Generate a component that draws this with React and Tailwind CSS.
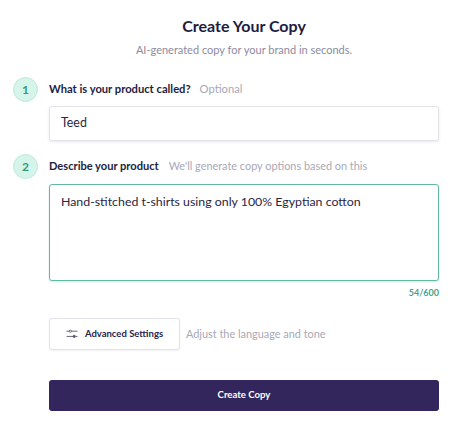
import React from 'react';

const StepBadge = ({ n }) => (
  <div className="w-[25px] h-[25px] rounded-full bg-[#d5f5ea] border border-[#bfeadb] flex items-center justify-center text-[12px] font-bold text-[#2f9c80] shrink-0">
    {n}
  </div>
);

const App = () => {
  return (
    <div className="w-[470px] h-[438px] bg-white overflow-hidden font-['Lato',sans-serif] text-[#221d3f]">
      <div className="pt-[16px] pl-[13px] pr-[31px]">
        <div className="pl-[36px] flex flex-col items-center">
          <h1 className="text-[16px] leading-[20px] font-bold text-[#211c40]">Create Your Copy</h1>
          <p className="mt-[6px] text-[11px] leading-[16px] text-[#8d8ba0]">AI-generated copy for your brand in seconds.</p>
        </div>

        <div className="mt-[19px] flex items-center gap-[11px]">
          <StepBadge n={1} />
          <div className="flex items-baseline gap-[9px]">
            <span className="text-[11.2px] font-bold text-[#221d3f]">What is your product called?</span>
            <span className="text-[11.2px] text-[#a9a8b5]">Optional</span>
          </div>
        </div>
        <div className="ml-[36px] mt-[4px] h-[35px] px-[11px] flex items-center bg-white border border-[#e3e3ea] rounded-[3px] shadow-[0_1px_3px_rgba(30,30,70,0.10)] text-[12.4px] text-[#2a2640]">
          Teed
        </div>

        <div className="mt-[13px] flex items-center gap-[11px]">
          <StepBadge n={2} />
          <div className="flex items-baseline gap-[10px]">
            <span className="text-[11.1px] font-bold text-[#221d3f]">Describe your product</span>
            <span className="text-[10.9px] text-[#a9a8b5]">We'll generate copy options based on this</span>
          </div>
        </div>
        <div className="ml-[36px] mt-[5px] h-[97px] px-[11px] py-[8px] bg-white border border-[#62b8a0] rounded-[3px] shadow-[0_1px_2px_rgba(60,180,150,0.25)] text-[12.35px] leading-[18px] text-[#2a2640]">
          Hand-stitched t-shirts using only 100% Egyptian cotton
        </div>
        <div className="ml-[36px] mt-[6px] text-right text-[9px] leading-[12px] font-bold text-[#4aa28c]">54/600</div>

        <div className="ml-[36px] mt-[19px] flex items-center gap-[6px]">
          <button className="w-[131px] h-[32px] flex items-center justify-center gap-[7px] bg-white border border-[#e2e1ec] rounded-[3px] shadow-[0_1px_2px_rgba(30,30,70,0.06)] text-[9.5px] font-bold text-[#2a2450]">
            <svg width="12" height="10" viewBox="0 0 12 10" fill="none" stroke="#55526a" strokeWidth="0.9">
              <path d="M0.5 2.2H3.2M5.6 2.2H11.5" />
              <circle cx="4.4" cy="2.2" r="1.1" />
              <path d="M0.5 7.4H7M9.4 7.4H11.5" />
              <circle cx="8.2" cy="7.4" r="1.1" fill="#55526a" />
            </svg>
            Advanced Settings
          </button>
          <span className="text-[10.9px] text-[#a9a8b5]">Adjust the language and tone</span>
        </div>

        <button className="ml-[36px] mt-[30px] w-[390px] h-[31px] flex items-center justify-center bg-[#32265c] rounded-[3px] text-[9.6px] font-bold text-white">
          Create Copy
        </button>
      </div>
    </div>
  );
};

export default App;
